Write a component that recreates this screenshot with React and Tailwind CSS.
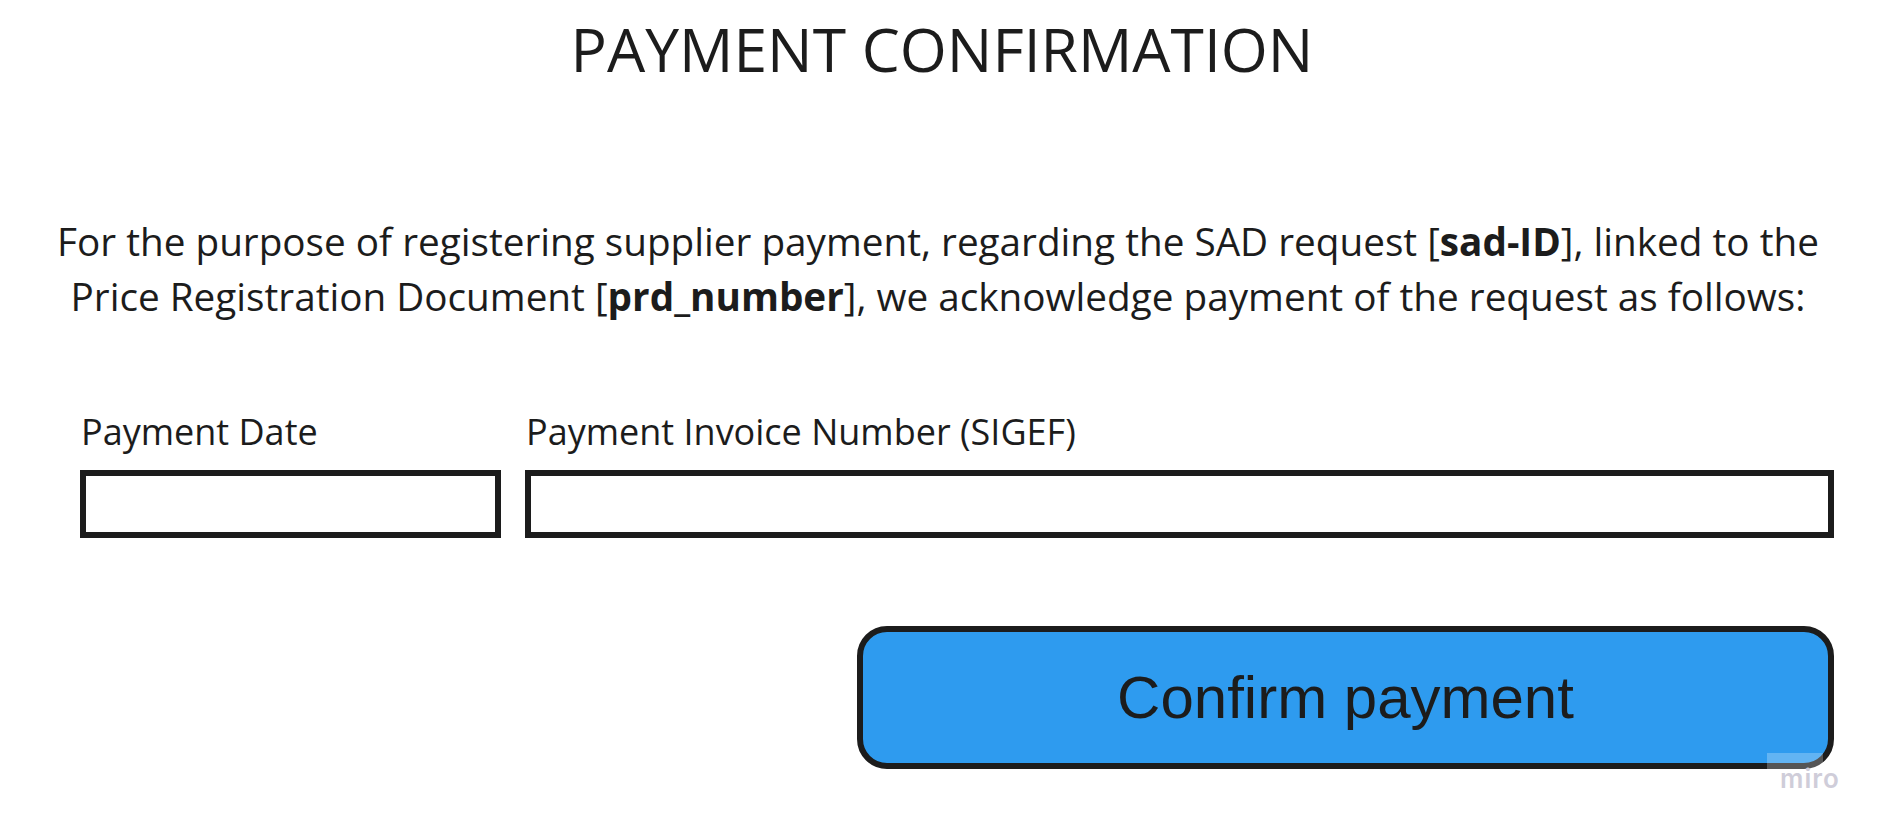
import React from 'react';

const App = () => {
  return (
    <div className="relative w-[1884px] h-[829px] bg-white text-[#1c1c1c] font-['Open_Sans',sans-serif] overflow-hidden">
      {/* Title */}
      <h1 className="pt-[12px] text-center text-[60.5px] leading-[74px] font-normal">
        PAYMENT CONFIRMATION
      </h1>

      {/* Intro text */}
      <p className="mt-[128px] pr-[8px] text-center text-[38.7px] leading-[55px]">
        For the purpose of registering supplier payment, regarding the SAD request [<b className="font-bold">sad-ID</b>], linked to the
        <br />
        Price Registration Document [<b className="font-bold">prd_number</b>], we acknowledge payment of the request as follows:
      </p>

      {/* Fields */}
      <div className="mt-[86px] pl-[80px] pr-[50px] flex gap-[24px]">
        <div className="w-[421px] flex flex-col">
          <label className="text-[36px] leading-[44px] pl-[1px]">Payment Date</label>
          <div className="mt-[16px] h-[68px] border-[6px] border-[#1c1c1c] bg-white" />
        </div>
        <div className="flex-1 flex flex-col">
          <label className="text-[36px] leading-[44px] pl-[1px]">Payment Invoice Number (SIGEF)</label>
          <div className="mt-[16px] h-[68px] border-[6px] border-[#1c1c1c] bg-white" />
        </div>
      </div>

      {/* Action */}
      <div className="mt-[88px] pr-[50px] flex justify-end">
        <button className="w-[977px] h-[143px] rounded-[30px] border-[6px] border-[#1c1c1c] bg-[#2e9bef] text-[60px] font-['Liberation_Sans',Arial,sans-serif] text-[#1c1c1c]">
          Confirm payment
        </button>
      </div>

      {/* watermark */}
      <div className="absolute left-[1767px] top-[753px] w-[56px] h-[16px] bg-white/25" />
      <div className="absolute left-[1780px] top-[764px] text-[26px] leading-[30px] tracking-[1px] font-['Inter',sans-serif] font-semibold text-[#cfcdd9]">
        miro
      </div>
    </div>
  );
};

export default App;
